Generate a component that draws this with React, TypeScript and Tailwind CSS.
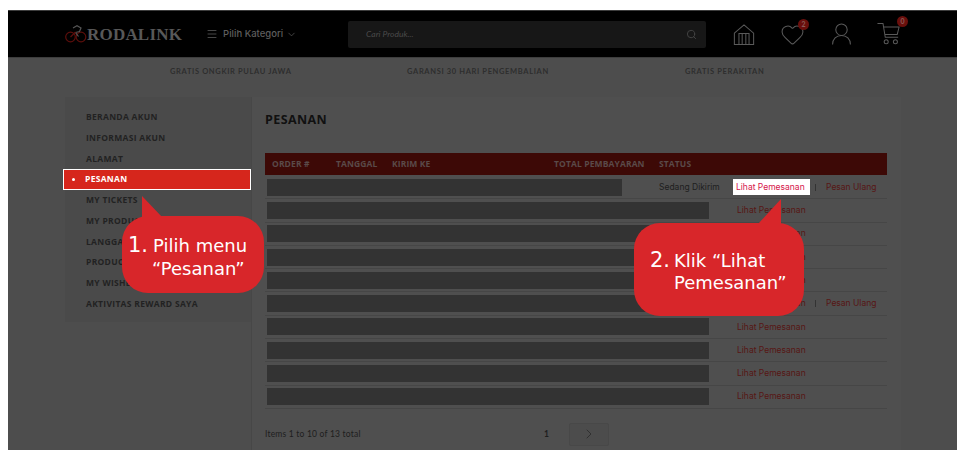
import React from 'react';
import { ChevronDown, ChevronRight, Menu, Search, Heart } from 'lucide-react';

const menuTop = ['BERANDA AKUN', 'INFORMASI AKUN', 'ALAMAT'];
const menuBottom = ['MY TICKETS', 'MY PRODUCT REVIEWS', 'LANGGANAN BERITA', 'PRODUCT SUBSCRIPTIONS', 'MY WISHLIST', 'AKTIVITAS REWARD SAYA'];

const rows = [
  { bar: 'w-[355px]', status: 'Sedang Dikirim', active: true, reorder: true },
  { bar: 'w-[442px]' },
  { bar: 'w-[442px]' },
  { bar: 'w-[442px]' },
  { bar: 'w-[442px]' },
  { bar: 'w-[442px]', reorder: true },
  { bar: 'w-[442px]' },
  { bar: 'w-[442px]' },
  { bar: 'w-[442px]' },
  { bar: 'w-[442px]' },
] as { bar: string; status?: string; active?: boolean; reorder?: boolean }[];

function Logo() {
  return (
    <div className="flex items-center">
      <svg width="22" height="18" viewBox="0 0 22 18" fill="none" strokeWidth="1.2">
        <circle cx="5.500" cy="12" r="4.800" stroke="#5c0e0b" />
        <circle cx="16" cy="12" r="4.800" stroke="#5c0e0b" />
        <path d="M8 3l4-2.200 4 2.200-1.500 3.500-4 1 3 4" stroke="#555" />
        <path d="M5.500 12l5-5" stroke="#5c0e0b" />
      </svg>
      <span className="font-['Liberation_Serif',serif] font-bold text-[17px] tracking-[0.2px] text-[#585858] mt-[2px]">RODALINK</span>
    </div>
  );
}

function Badge({ n, className }: { n: string; className: string }) {
  return (
    <span className={`absolute w-[11px] h-[11px] rounded-full bg-[#6a0f0c] text-[#8a5a58] text-[7px] font-bold flex items-center justify-center ${className}`}>
      {n}
    </span>
  );
}

function Bubble({ className, tail, children }: { className: string; tail: React.ReactNode; children: React.ReactNode }) {
  return (
    <div className={`absolute bg-[#d8262a] rounded-[26px] text-white font-['DejaVu_Sans',sans-serif] ${className}`}>
      {tail}
      {children}
    </div>
  );
}

export default function App() {
  return (
    <div className="w-[968px] h-[462px] bg-white pt-[10px] pl-[8px] overflow-hidden">
      <div className="relative w-[949px] h-[440px] bg-[#4d4d4d] overflow-hidden font-['Lato',sans-serif]">
        <header className="h-[48px] bg-black border-t border-b border-[#3d3d3d] flex items-center pl-[57px]">
          <Logo />
          <div className="flex items-center ml-[24px] text-[#5e5e5e] text-[9.500px] font-medium w-[142px]">
            <Menu size={12} strokeWidth={1.5} className="mr-[5px]" />
            <span className="font-['Inter',sans-serif]">Pilih Kategori</span>
            <ChevronDown size={11} strokeWidth={1.5} className="ml-[3px]" />
          </div>
          <div className="w-[358px] h-[27px] rounded-[2px] bg-[#171717] flex items-center justify-between pl-[18px] pr-[9px]">
            <span className="italic text-[8.500px] text-[#4a4a4a]">Cari Produk...</span>
            <Search size={11} strokeWidth={2} className="text-[#454545]" />
          </div>
          <div className="flex items-center ml-[27px] text-[#5a5a5a]">
            <svg width="22" height="23" viewBox="0 0 24 24" fill="none" stroke="currentColor" strokeWidth="1.100">
              <path d="M1.500 10.500L12 1.500l10.500 9V23h-21zM6.500 23V11h11v12M10 11v12M14 11v12" />
            </svg>
            <span className="relative ml-[25px] flex">
              <Heart size={25} strokeWidth={1} />
              <Badge n="2" className="-top-[3px] -right-[4px]" />
            </span>
            <svg className="ml-[27px]" width="19" height="22" viewBox="0 0 20 23" fill="none" stroke="currentColor" strokeWidth="1.100">
              <circle cx="10" cy="7" r="6" />
              <path d="M.600 22.500c0-5.500 4-9.500 9.400-9.500s9.400 4 9.400 9.500" />
            </svg>
            <span className="relative ml-[26px] flex">
              <svg width="23" height="24" viewBox="0 0 25 25" fill="none" stroke="currentColor" strokeWidth="1.100">
                <path d="M.500 1h6l2.500 15h14M7.300 5H24l-2 8H8.500" />
                <circle cx="10" cy="21" r="2.200" />
                <circle cx="20" cy="21" r="2.200" />
              </svg>
              <Badge n="0" className="-top-[6px] -right-[8px]" />
            </span>
          </div>
        </header>

        <div className="h-[39px] relative text-[7.500px] font-bold tracking-[0.65px] text-[#2e2e2e]">
          <div className="flex items-center pt-[8px] pl-[162px]">
            <span className="w-[237px]">GRATIS ONGKIR PULAU JAWA</span>
            <span className="w-[278px]">GARANSI 30 HARI PENGEMBALIAN</span>
            <span>GRATIS PERAKITAN</span>
          </div>
        </div>

        <div className="flex pl-[57px]">
          <aside className="w-[186px] h-[225px] bg-[#4a4a4a] pt-[10px] text-[8.500px] font-bold tracking-[0.3px] text-[#222] font-['Open_Sans',sans-serif]">
            {menuTop.map(m => (
              <div key={m} className="h-[21px] flex items-center pl-[21px]">{m}</div>
            ))}
            <div className="-ml-[2px] w-[188px] h-[21px] -mt-[1px] border border-white bg-[#d6261c] flex items-center pl-[8px] text-white text-[8.500px]">
              <span className="w-[3px] h-[3px] rounded-full bg-white mr-[10px]" />
              PESANAN
            </div>
            {menuBottom.map(m => (
              <div key={m} className="h-[20.800px] flex items-center pl-[21px]">{m}</div>
            ))}
          </aside>

          <main className="w-[650px] h-[400px] bg-[#4f4f4f] border-l border-[#474747] pl-[13px] pt-[14px]">
            <h1 className="font-['Open_Sans',sans-serif] font-bold text-[12.500px] leading-[17px] tracking-[0.4px] text-[#111]">PESANAN</h1>
            <div className="mt-[25px] w-[622px] h-[22px] bg-[#3d0906] flex items-center pl-[7px] text-[8.500px] font-bold tracking-[0.12px] text-[#5a4a49] font-['Open_Sans',sans-serif]">
              <span className="w-[64px]">ORDER #</span>
              <span className="w-[56px]">TANGGAL</span>
              <span className="w-[162px]">KIRIM KE</span>
              <span className="w-[105px]">TOTAL PEMBAYARAN</span>
              <span>STATUS</span>
            </div>
            <div className="pt-[1px]">
              {rows.map((r, i) => (
                <div key={i} className="h-[23.300px] w-[622px] border-b border-[#464646] flex items-center pl-[2px] text-[8.500px] font-['Inter',sans-serif]">
                  <div className={`h-[17px] bg-[#333333] ${r.bar}`} />
                  {r.status && <span className="ml-[37px] w-[69px] text-[#1e1e1e]">{r.status}</span>}
                  <span className={r.active ? 'ml-[5px] px-[3px] w-[77px] h-[16px] flex items-center bg-white text-[#d6154a] whitespace-nowrap' : 'ml-[28px] w-[69px] text-[#571614] whitespace-nowrap'}>Lihat Pemesanan</span>
                  {r.reorder && (
                    <>
                      <span className={r.active ? 'ml-[5px] w-px h-[7px] bg-[#333]' : 'ml-[9px] w-px h-[7px] bg-[#333]'} />
                      <span className="ml-[10px] text-[#571614]">Pesan Ulang</span>
                    </>
                  )}
                </div>
              ))}
            </div>
            <div className="flex items-center mt-[14px] w-[622px] text-[8.500px] text-[#1e1e1e] tracking-[0.2px]">
              <span className="w-[279px]">Items 1 to 10 of 13 total</span>
              <span className="w-[25px] font-bold">1</span>
              <span className="w-[40px] h-[23px] rounded-[2px] border border-[#484848] bg-[#4c4c4c] flex items-center justify-center text-[#2a2a2a]">
                <ChevronRight size={16} strokeWidth={1.200} />
              </span>
            </div>
          </main>
        </div>

        <Bubble
          className="left-[114px] top-[206px] w-[142px] h-[77px] pt-[18px] text-[18px] leading-[23px]"
          tail={
            <svg className="absolute left-[20px] -top-[20px]" width="20" height="21" viewBox="0 0 20 21">
              <path d="M0 0L20 21H0z" fill="#d8262a" />
            </svg>
          }
        >
          <div className="pl-[6px]"><span className="text-[21px] mr-[5px]">1.</span>Pilih menu</div>
          <div className="pl-[30px]">“Pesanan”</div>
        </Bubble>

        <Bubble
          className="left-[626px] top-[213px] w-[170px] h-[93px] pt-[26px] text-[18px] leading-[22px]"
          tail={
            <svg className="absolute left-[124px] -top-[24px]" width="23" height="25" viewBox="0 0 23 25">
              <path d="M23 0V25H0z" fill="#d8262a" />
            </svg>
          }
        >
          <div className="pl-[16px]"><span className="text-[21px] mr-[4px]">2.</span>Klik “Lihat</div>
          <div className="pl-[40px]">Pemesanan”</div>
        </Bubble>
      </div>
    </div>
  );
}
